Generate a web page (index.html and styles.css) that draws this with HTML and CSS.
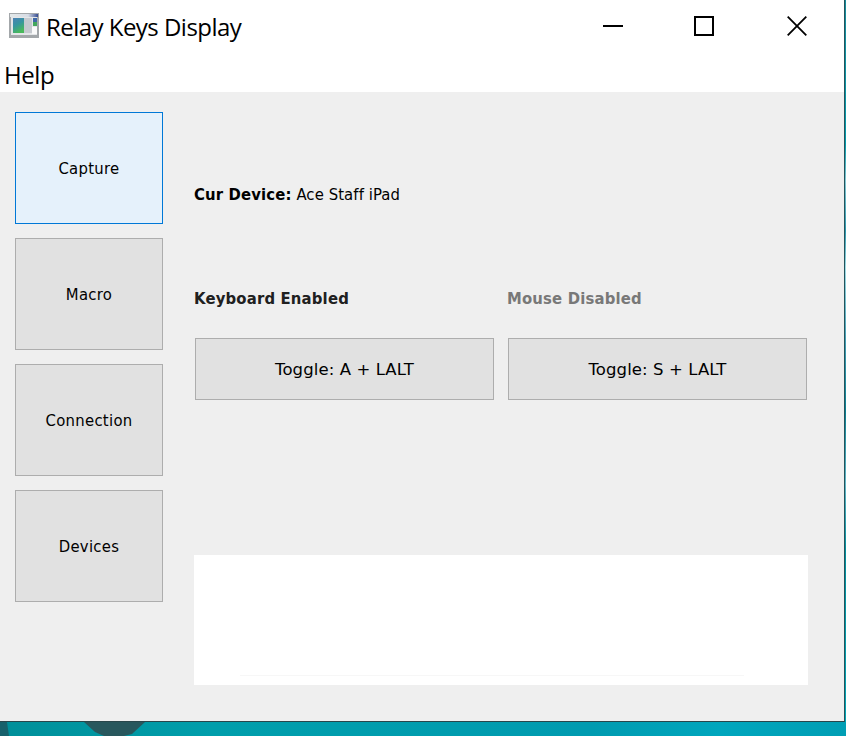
FILE: index.html
```html
<!DOCTYPE html>
<html lang="en">
<head>
<meta charset="utf-8">
<title>Relay Keys Display</title>
<link rel="stylesheet" href="styles.css">
</head>
<body>
<div class="window">
  <header class="titlebar">
    <svg class="app-icon" width="30" height="25" viewBox="0 0 30 25">
      <defs>
        <linearGradient id="pane" x1="0" y1="0" x2=".45" y2="1"><stop offset="0" stop-color="#4c80b6"/><stop offset=".5" stop-color="#3795a0"/><stop offset="1" stop-color="#49b95b"/></linearGradient>
        <linearGradient id="bar"><stop offset="0" stop-color="#e3e8e9"/><stop offset=".65" stop-color="#d7dce5"/><stop offset="1" stop-color="#344b91"/></linearGradient>
      </defs>
      <path fill="#a3a7aa" d="M0 0h30v25H0z"/>
      <path fill="#e4e6e8" d="M2 4h26v18H2z"/>
      <path fill="url(#bar)" d="M1 1h28v3H1z"/>
      <path fill="url(#pane)" d="M4 5h11v15H4z"/>
      <path fill="#c5c9cf" d="M15 5h8v15h-8z"/>
      <path fill="#3f68a8" d="M24 5h4v4h-4z"/>
      <path fill="#42a65b" d="M24 9h4v4h-4z"/>
      <path fill="#fafafa" d="M23 14h5v7h-5z"/>
    </svg>
    <h1 class="title">Relay Keys Display</h1>
    <div class="controls">
      <svg width="20" height="20" viewBox="0 0 20 20"><path d="M0 10h20"/></svg>
      <svg width="20" height="20" viewBox="0 0 20 20"><path d="M1 1h18v18H1z"/></svg>
      <svg class="close" width="20" height="20" viewBox="0 0 20 20"><path d="M.7.7l18.6 18.6M19.3.7L.7 19.3"/></svg>
    </div>
  </header>
  <nav class="menubar"><span class="menu-item">Help</span></nav>
  <main class="content">
    <aside class="sidebar">
      <button class="button active"><span>Capture</span></button>
      <button class="button"><span>Macro</span></button>
      <button class="button"><span>Connection</span></button>
      <button class="button"><span>Devices</span></button>
    </aside>
    <section class="panel">
      <p class="device"><b>Cur Device:</b> <span>Ace Staff iPad</span></p>
      <div class="toggles">
        <div class="toggle"><b class="status">Keyboard Enabled</b><button class="button"><span>Toggle: A + LALT</span></button></div>
        <div class="toggle"><b class="status disabled">Mouse Disabled</b><button class="button"><span>Toggle: S + LALT</span></button></div>
      </div>
      <div class="output"><div class="output-line"></div></div>
    </section>
  </main>
</div>
<div class="desktop-edge"></div>
<svg class="desktop" width="846" height="14" viewBox="0 0 846 14">
  <defs><linearGradient id="sea"><stop offset="0" stop-color="#008f99"/><stop offset=".25" stop-color="#009eab"/><stop offset=".7" stop-color="#009bb0"/><stop offset=".85" stop-color="#00a6bd"/><stop offset="1" stop-color="#009eb4"/></linearGradient></defs>
  <path fill="url(#sea)" d="M0 0h846v14H0z"/>
  <path fill="#17616b" d="M0 0h7l2 14H0z"/>
  <path fill="#28575d" d="M84 0h61l-13 12-8 2h-20l-9-4z"/>
</svg>
</body>
</html>
```

FILE: styles.css
```css
* { box-sizing: border-box; }
body {
  margin: 0;
  width: 846px;
  height: 736px;
  overflow: hidden;
  display: grid;
  grid-template-columns: 845px 1px;
  grid-template-rows: 722px 14px;
  color: #000;
  font-family: "DejaVu Sans Condensed", "DejaVu Sans", sans-serif;
  font-stretch: condensed;
  font-size: 16.5px;
}
.window {
  display: flex;
  flex-direction: column;
  background: #fff;
  border-right: 1px solid #24545c;
  border-bottom: 1px solid #29464b;
}
.titlebar { height: 56px; display: flex; align-items: flex-start; padding: 13px 37px 0 9px; }
.app-icon { flex: none; filter: blur(.4px); }
.title {
  margin: -4px 0 0 7px;
  font: 400 24px/36px "Open Sans", "Noto Sans", sans-serif;
  letter-spacing: -.53px;
  white-space: nowrap;
}
.controls { margin: 3px 0 0 auto; display: flex; gap: 71px; }
.controls svg { fill: none; stroke: #000; stroke-width: 2; }
.controls .close { margin-left: 2px; stroke-width: 1.8; }
.menubar { height: 36px; padding-left: 4px; font: 24px/38px "Open Sans", "Noto Sans", sans-serif; letter-spacing: -.4px; }
.content { flex: 1; display: flex; gap: 31px; padding: 20px 36px 0 15px; background: #efefef; }
.sidebar { width: 148px; display: flex; flex-direction: column; gap: 14px; }
.button {
  height: 112px;
  padding: 0;
  border: 1px solid #adadad;
  background: #e1e1e1;
  color: #000;
  font: inherit;
  letter-spacing: .3px;
}
.button.active { border-color: #0078d7; background: #e5f1fb; }
.panel { width: 614px; }
.device { margin: 71px 0 0; line-height: 24px; white-space: nowrap; letter-spacing: .1px; }
.device b { letter-spacing: .15px; }
.toggles { display: grid; grid-template-columns: 299px 299px; gap: 14px; margin: 80px 0 0 1px; }
.toggle { display: flex; flex-direction: column; }
.toggle .button {
  height: 62px;
  margin-top: 27px;
  font-family: "DejaVu Sans", sans-serif;
  font-stretch: normal;
  letter-spacing: .1px;
}
.status { margin-left: -1px; line-height: 24px; letter-spacing: .18px; color: #202020; }
.status.disabled { color: #787878; }
.output { height: 130px; margin-top: 155px; padding: 120px 64px 0 46px; background: #fff; }
.output-line { height: 1px; background: #f7f7f7; }
.desktop-edge { background: linear-gradient(#168b9b 0, #009bab 20%, #83c8d3 25%, #2b98ae 32%, #a0dce5 37%, #429fb5 47%, #087f91 57%, #62b7c7 67%, #008f9d 76%, #00a5b5 100%); }
.desktop { grid-column: 1 / 3; display: block; }
```
